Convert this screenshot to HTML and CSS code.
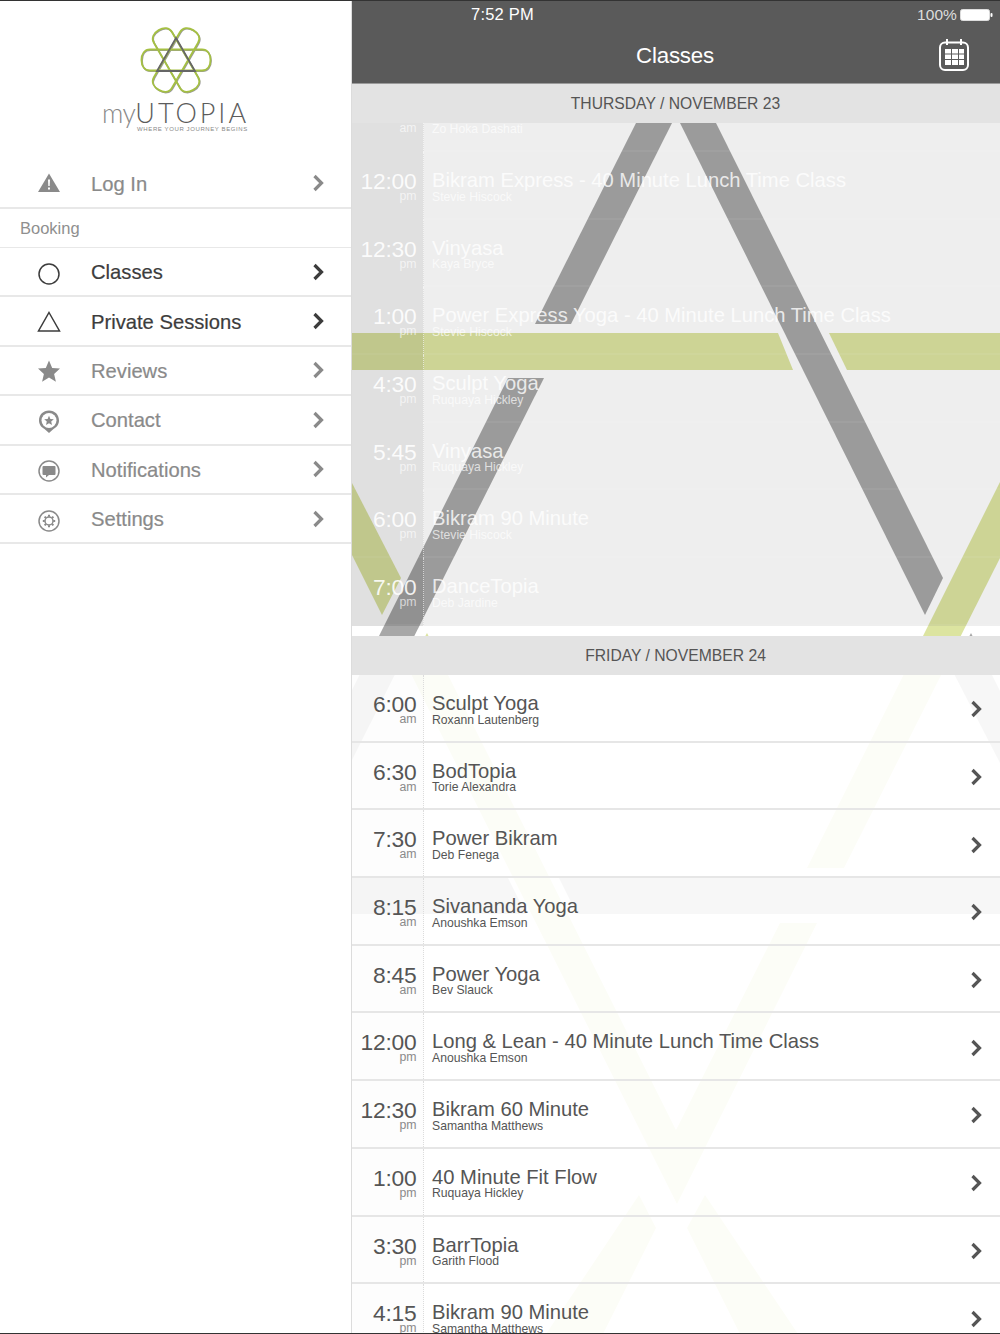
FILE: index.html
```html
<!DOCTYPE html>
<html lang="en">
<head>
<meta charset="utf-8">
<title>myUTOPIA Classes</title>
<link rel="stylesheet" href="styles.css">
</head>
<body>
<div class="app">
  <aside class="sidebar">
    <div class="brand">
      <svg class="brand-mark" viewBox="135 22 80 76" width="80" height="76" aria-hidden="true">
        <defs>
          <path id="lobe" d="M190,49.5 L149,49.5 C143.5,49.5 140.5,54 140.5,60 C140.5,66 143.5,70.5 149,70.5 L160,70.5"/>
          <g id="flower">
            <use href="#lobe"/>
            <use href="#lobe" transform="rotate(60 175 60)"/>
            <use href="#lobe" transform="rotate(120 175 60)"/>
            <use href="#lobe" transform="rotate(180 175 60)"/>
            <use href="#lobe" transform="rotate(240 175 60)"/>
            <use href="#lobe" transform="rotate(300 175 60)"/>
          </g>
        </defs>
        <use href="#flower" class="mark-shadow" transform="translate(0.6 0.8)"/>
        <use href="#flower" class="mark-green"/>
        <path class="mark-tri" d="M175,38 L194,71 L156,71 Z"/>
      </svg>
      <div class="wordmark"><span class="wm-my">my</span><span class="wm-name">UTOPIA</span></div>
      <div class="tagline">WHERE YOUR JOURNEY BEGINS</div>
    </div>
    <nav class="menu">
      <a class="menu-row">
        <svg class="mi" viewBox="0 0 24 24"><path class="fill" d="M12,1.5 L23,20 L1,20 Z"/><path class="cut" d="M11,7.5 H13 L12.7,14 H11.3 Z M11,15.5 H13 V17.5 H11 Z"/></svg>
        <span class="menu-label">Log In</span>
        <svg class="chev" viewBox="0 0 12 18"><path d="M2.5,2 L9.5,9 L2.5,16"/></svg>
      </a>
      <div class="menu-section">Booking</div>
      <a class="menu-row is-active">
        <svg class="mi" viewBox="0 0 24 24"><circle class="line" cx="12" cy="13" r="10"/></svg>
        <span class="menu-label">Classes</span>
        <svg class="chev" viewBox="0 0 12 18"><path d="M2.5,2 L9.5,9 L2.5,16"/></svg>
      </a>
      <a class="menu-row is-active">
        <svg class="mi" viewBox="0 0 24 24"><path class="line" d="M12,2.5 L22.5,21 L1.5,21 Z"/></svg>
        <span class="menu-label">Private Sessions</span>
        <svg class="chev" viewBox="0 0 12 18"><path d="M2.5,2 L9.5,9 L2.5,16"/></svg>
      </a>
      <a class="menu-row">
        <svg class="mi" viewBox="0 0 24 24"><path class="fill" d="M12,1.5 L15.2,9 L23,9.6 L17.1,14.9 L18.9,22.8 L12,18.6 L5.1,22.8 L6.9,14.9 L1,9.6 L8.8,9 Z"/></svg>
        <span class="menu-label">Reviews</span>
        <svg class="chev" viewBox="0 0 12 18"><path d="M2.5,2 L9.5,9 L2.5,16"/></svg>
      </a>
      <a class="menu-row">
        <svg class="mi" viewBox="0 0 24 24"><path class="fill" d="M12,1.5 C6.2,1.5 2,5.8 2,11.5 C2,15.5 4.5,18.4 7.5,20 L12,24 L16.5,20 C19.5,18.4 22,15.5 22,11.5 C22,5.8 17.8,1.5 12,1.5 Z"/><circle class="cut" cx="12" cy="11.5" r="7.5"/><path class="fill" d="M12,6.8 L13.4,10 L16.8,10.3 L14.2,12.6 L15,15.9 L12,14.2 L9,15.9 L9.8,12.6 L7.2,10.3 L10.6,10 Z"/></svg>
        <span class="menu-label">Contact</span>
        <svg class="chev" viewBox="0 0 12 18"><path d="M2.5,2 L9.5,9 L2.5,16"/></svg>
      </a>
      <a class="menu-row">
        <svg class="mi" viewBox="0 0 24 24"><circle class="line gray" cx="12" cy="13" r="10"/><path class="fill" d="M6.5,8 H17.5 A1,1 0 0 1 18.5,9 V16 A1,1 0 0 1 17.5,17 H12 L9,19.5 V17 H6.5 A1,1 0 0 1 5.5,16 V9 A1,1 0 0 1 6.5,8 Z"/></svg>
        <span class="menu-label">Notifications</span>
        <svg class="chev" viewBox="0 0 12 18"><path d="M2.5,2 L9.5,9 L2.5,16"/></svg>
      </a>
      <a class="menu-row">
        <svg class="mi" viewBox="0 0 24 24"><circle class="line gray" cx="12" cy="13" r="10"/><circle class="line gray" cx="12" cy="13" r="4"/><path class="line gray dash" d="M12,6.8 V8.8 M12,17.2 V19.2 M5.8,13 H7.8 M16.2,13 H18.2 M7.6,8.6 L9,10 M15,16 L16.4,17.4 M16.4,8.6 L15,10 M9,16 L7.6,17.4"/></svg>
        <span class="menu-label">Settings</span>
        <svg class="chev" viewBox="0 0 12 18"><path d="M2.5,2 L9.5,9 L2.5,16"/></svg>
      </a>
    </nav>
  </aside>

  <main class="main">
    <header class="topbar">
      <div class="status">
        <span class="status-time">7:52 PM</span>
        <span class="status-batt">100%
          <svg class="battery" viewBox="0 0 33 12" width="33" height="12"><rect x="0.5" y="0.5" width="29" height="11" rx="2" fill="#fff" stroke="#ddd" stroke-width="1"/><rect x="30.5" y="4" width="2" height="4" rx="1" fill="#fff"/></svg>
        </span>
      </div>
      <div class="titlebar">
        <h1 class="title">Classes</h1>
        <svg class="cal" viewBox="0 0 30 33" width="30" height="33">
          <rect x="1" y="4.5" width="28" height="27.5" rx="5" fill="none" stroke="#fff" stroke-width="2"/>
          <path d="M8,1 V7 M22,1 V7" stroke="#fff" stroke-width="2" fill="none"/>
          <path fill="#fff" d="M6,11 H12 V15.5 H6 Z M13,11 H19 V15.5 H13 Z M20,11 H25 V15.5 H20 Z M6,16.5 H12 V21 H6 Z M13,16.5 H19 V21 H13 Z M20,16.5 H25 V21 H20 Z M6,22 H12 V27 H6 Z M13,22 H19 V27 H13 Z M20,22 H25 V27 H20 Z"/>
        </svg>
      </div>
    </header>

    <div class="schedule">
      <svg class="art" viewBox="352 84 648 1250" width="648" height="1250" aria-hidden="true">
        <g class="art-gray">
          <polygon points="636,123 672,123 571,324 535,324"/>
          <polygon points="508,378 544,378 352,760 352,690"/>
          <polygon points="680,123 716,123 943,578 925,615"/>
          <polygon points="971,633 1000,691 1000,763 952,670"/>
          <polygon points="352,878 508,878 526,914 352,914"/>
          <polygon points="559,878 1000,878 1000,914 577,914"/>
        </g>
        <g class="art-green">
          <polygon points="352,333 778,333 793,370 352,370"/>
          <polygon points="829,333 1000,333 1000,370 847,370"/>
          <polygon points="352,483 401,578 382,615 352,555"/>
          <polygon points="1000,482 1000,558 844,868 807,868"/>
          <polygon points="817,923 780,923 676,1130 427,633 408,668 677,1204"/>
          <polygon points="639,1195 656,1228 603,1334 546,1334"/>
          <polygon points="705,1195 687,1228 740,1334 798,1334"/>
        </g>
      </svg>

      <section class="day">
        <h2 class="day-head">THURSDAY / NOVEMBER 23</h2>
        <div class="rows rows-past">
          <div class="row"><div class="when"><b>11:30</b><small>am</small></div><div class="what"><h3>Yoga</h3><p>Zo Hoka Dashati</p></div></div>
          <div class="row"><div class="when"><b>12:00</b><small>pm</small></div><div class="what"><h3>Bikram Express - 40 Minute Lunch Time Class</h3><p>Stevie Hiscock</p></div></div>
          <div class="row"><div class="when"><b>12:30</b><small>pm</small></div><div class="what"><h3>Vinyasa</h3><p>Kaya Bryce</p></div></div>
          <div class="row"><div class="when"><b>1:00</b><small>pm</small></div><div class="what"><h3>Power Express Yoga - 40 Minute Lunch Time Class</h3><p>Stevie Hiscock</p></div></div>
          <div class="row"><div class="when"><b>4:30</b><small>pm</small></div><div class="what"><h3>Sculpt Yoga</h3><p>Ruquaya Hickley</p></div></div>
          <div class="row"><div class="when"><b>5:45</b><small>pm</small></div><div class="what"><h3>Vinyasa</h3><p>Ruquaya Hickley</p></div></div>
          <div class="row"><div class="when"><b>6:00</b><small>pm</small></div><div class="what"><h3>Bikram 90 Minute</h3><p>Stevie Hiscock</p></div></div>
          <div class="row"><div class="when"><b>7:00</b><small>pm</small></div><div class="what"><h3>DanceTopia</h3><p>Deb Jardine</p></div></div>
        </div>
        <div class="day-gap"></div>
      </section>

      <section class="day">
        <h2 class="day-head">FRIDAY / NOVEMBER 24</h2>
        <div class="rows rows-today">
          <div class="row"><div class="when"><b>6:00</b><small>am</small></div><div class="what"><h3>Sculpt Yoga</h3><p>Roxann Lautenberg</p></div><svg class="chev" viewBox="0 0 12 18"><path d="M2.5,2 L9.5,9 L2.5,16"/></svg></div>
          <div class="row"><div class="when"><b>6:30</b><small>am</small></div><div class="what"><h3>BodTopia</h3><p>Torie Alexandra</p></div><svg class="chev" viewBox="0 0 12 18"><path d="M2.5,2 L9.5,9 L2.5,16"/></svg></div>
          <div class="row"><div class="when"><b>7:30</b><small>am</small></div><div class="what"><h3>Power Bikram</h3><p>Deb Fenega</p></div><svg class="chev" viewBox="0 0 12 18"><path d="M2.5,2 L9.5,9 L2.5,16"/></svg></div>
          <div class="row"><div class="when"><b>8:15</b><small>am</small></div><div class="what"><h3>Sivananda Yoga</h3><p>Anoushka Emson</p></div><svg class="chev" viewBox="0 0 12 18"><path d="M2.5,2 L9.5,9 L2.5,16"/></svg></div>
          <div class="row"><div class="when"><b>8:45</b><small>am</small></div><div class="what"><h3>Power Yoga</h3><p>Bev Slauck</p></div><svg class="chev" viewBox="0 0 12 18"><path d="M2.5,2 L9.5,9 L2.5,16"/></svg></div>
          <div class="row"><div class="when"><b>12:00</b><small>pm</small></div><div class="what"><h3>Long &amp; Lean - 40 Minute Lunch Time Class</h3><p>Anoushka Emson</p></div><svg class="chev" viewBox="0 0 12 18"><path d="M2.5,2 L9.5,9 L2.5,16"/></svg></div>
          <div class="row"><div class="when"><b>12:30</b><small>pm</small></div><div class="what"><h3>Bikram 60 Minute</h3><p>Samantha Matthews</p></div><svg class="chev" viewBox="0 0 12 18"><path d="M2.5,2 L9.5,9 L2.5,16"/></svg></div>
          <div class="row"><div class="when"><b>1:00</b><small>pm</small></div><div class="what"><h3>40 Minute Fit Flow</h3><p>Ruquaya Hickley</p></div><svg class="chev" viewBox="0 0 12 18"><path d="M2.5,2 L9.5,9 L2.5,16"/></svg></div>
          <div class="row"><div class="when"><b>3:30</b><small>pm</small></div><div class="what"><h3>BarrTopia</h3><p>Garith Flood</p></div><svg class="chev" viewBox="0 0 12 18"><path d="M2.5,2 L9.5,9 L2.5,16"/></svg></div>
          <div class="row"><div class="when"><b>4:15</b><small>pm</small></div><div class="what"><h3>Bikram 90 Minute</h3><p>Samantha Matthews</p></div><svg class="chev" viewBox="0 0 12 18"><path d="M2.5,2 L9.5,9 L2.5,16"/></svg></div>
        </div>
      </section>
    </div>
  </main>
</div>
</body>
</html>
```

FILE: styles.css
```css
* { box-sizing: border-box; }
html, body { margin: 0; padding: 0; background: #fff; }
body { font-family: "Liberation Sans", Arial, sans-serif; color: #555; }
h1, h2, h3, p { margin: 0; font-weight: 400; }

.app {
  display: flex;
  width: 1000px;
  height: 1334px;
  overflow: hidden;
  border-top: 1px solid #333;
  border-bottom: 1px solid #333;
}

/* Sidebar */
.sidebar {
  flex: 0 0 352px;
  border-right: 1px solid #dcdcdc;
  background: #fff;
}
.brand {
  height: 158.6px;
  padding-top: 21px;
  display: flex;
  flex-direction: column;
  align-items: center;
}
.brand-mark { display: block; flex: none; fill: none; }
.mark-shadow { stroke: #9a9a9a; stroke-width: 1.6; fill: none; }
.mark-green { stroke: #a5c043; stroke-width: 1.9; fill: none; }
.mark-tri { stroke: #666; stroke-width: 1.8; fill: none; }
.wordmark {
  display: flex;
  align-items: baseline;
  font-family: Lato, "Liberation Sans", sans-serif;
  font-weight: 300;
  color: #5c5c5c;
  line-height: 30px;
  margin: 0 0 0 0;
}
.wm-my { font-size: 26.5px; color: #888; letter-spacing: -0.5px; }
.wm-name { font-size: 27px; letter-spacing: 3px; }
.tagline {
  font-family: "Liberation Sans", sans-serif;
  font-size: 6px;
  line-height: 7px;
  letter-spacing: 0.6px;
  color: #888;
  margin: -2px 0 0 34px;
  white-space: nowrap;
}

.menu-row {
  display: flex;
  align-items: center;
  height: 49.4px;
  padding: 2px 27px 0 37px;
  border-bottom: 2px solid #e8e8e8;
  color: #8a8a8a;
}
.menu-row.is-active { color: #3c3c3c; }
.menu-row > .chev { margin-top: -2px; }
.menu-label {
  flex: 1;
  margin-left: 30px;
  font-size: 20.2px;
  -webkit-text-stroke: 0.2px currentColor;
}
.menu-section {
  height: 39px;
  padding: 10.5px 0 0 20px;
  border-bottom: 1px solid #e8e8e8;
  font-size: 16.5px;
  line-height: 19px;
  color: #8f8f8f;
}
.mi { width: 24px; height: 24px; flex: none; }
.mi .fill { fill: #8a8a8a; }
.mi .cut { fill: #fff; }
.mi .line { fill: none; stroke: #3c3c3c; stroke-width: 1.5; }
.mi .line.gray { stroke: #8a8a8a; }
.mi .dash { stroke-width: 2; }
.chev {
  width: 12px;
  height: 18px;
  flex: none;
  fill: none;
  stroke: currentColor;
  stroke-width: 3.2;
}

/* Main panel */
.main {
  flex: 1;
  min-width: 0;
  display: flex;
  flex-direction: column;
}
.topbar {
  flex: none;
  height: 83px;
  background: #5a5a5a;
  border-bottom: 1px solid #9a9a9a;
  color: #fff;
}
.status {
  display: flex;
  justify-content: space-between;
  align-items: center;
  height: 27px;
  padding: 0 7px 0 119px;
}
.status-time { font-size: 16.5px; letter-spacing: 0.2px; }
.status-batt {
  display: flex;
  align-items: center;
  gap: 3px;
  font-size: 15.5px;
  letter-spacing: 0.1px;
  color: #ddd;
}
.titlebar {
  position: relative;
  height: 55px;
  display: flex;
  align-items: center;
  justify-content: center;
}
.title { font-size: 22.3px; letter-spacing: -0.2px; margin-right: 2px; }
.cal { position: absolute; right: 31px; top: 10px; }

/* Schedule */
.schedule {
  position: relative;
  flex: 1;
  min-height: 0;
  overflow: hidden;
  background: #fff;
}
.art { position: absolute; left: 0; top: 0; }
.art-gray { fill: #a7a7a7; }
.art-green { fill: #dce4a0; }
.day { position: relative; }
.day-head {
  height: 39px;
  position: relative;
  background: #e3e3e3;
  color: #555;
  font-size: 15.7px;
  line-height: 39px;
  text-align: center;
  padding-right: 1px;
}
.day-gap { height: 10px; }

.rows { overflow: hidden; }
.rows-past { height: 503px; }
.rows-past .row:first-child { margin-top: -38.7px; }

.row {
  display: flex;
  height: 67.7px;
  align-items: stretch;
  padding-right: 18px;
}
.when {
  flex: none;
  width: 72px;
  display: flex;
  flex-direction: column;
  align-items: flex-end;
  padding: 16px 6.5px 0 0;
  border-right: 1px dotted #dcdcdc;
}
.when b { font-weight: 400; font-size: 22.8px; line-height: 26px; letter-spacing: -0.2px; }
.when small { font-size: 12.3px; line-height: 13px; margin-top: -4px; color: #8a8a8a; }
.what {
  flex: 1;
  min-width: 0;
  padding: 15px 0 0 8px;
}
.what h3 { font-size: 20.2px; line-height: 26px; white-space: nowrap; }
.what p { font-size: 12.2px; line-height: 14px; margin-top: -3.5px; white-space: nowrap; }
.row > .chev { align-self: center; margin-top: 3px; color: #555; }

.rows-past .row {
  background: rgba(0, 0, 0, 0.067);
  box-shadow: inset 0 -2px 0 rgba(255, 255, 255, 0.06);
  color: rgba(255, 255, 255, 0.8);
}
.rows-past .when {
  background: rgba(0, 0, 0, 0.06);
  border-right-color: rgba(255, 255, 255, 0.6);
}
.rows-past .when b { color: rgba(255, 255, 255, 0.88); }
.rows-past .when small { color: rgba(255, 255, 255, 0.65); }
.rows-past .what p { color: rgba(255, 255, 255, 0.7); }

.rows-today .row {
  background: rgba(255, 255, 255, 0.91);
  border-bottom: 2px solid #e6e6e6;
}
.rows-today .when { background: rgba(0, 0, 0, 0.008); }
```
